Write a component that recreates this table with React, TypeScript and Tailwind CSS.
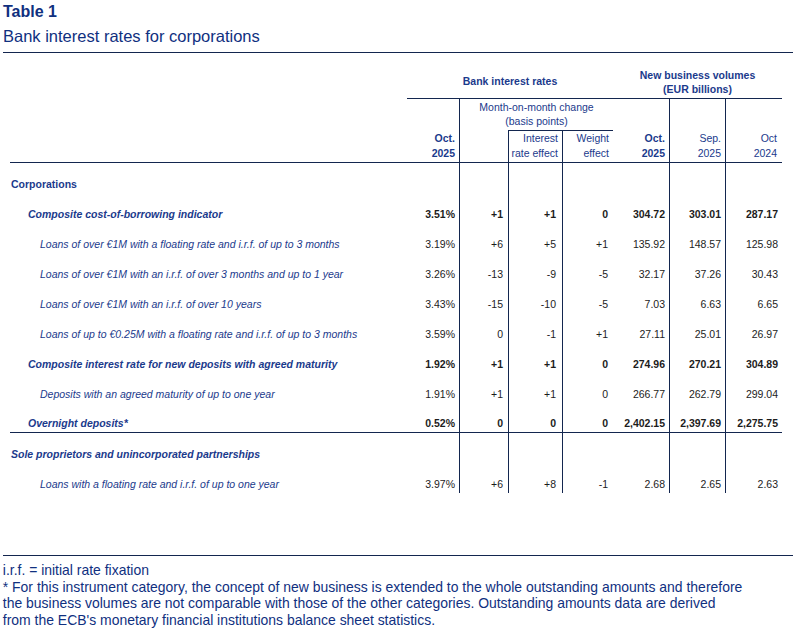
import React from "react";

const COLS = "grid grid-cols-[397px_52px_49px_54px_51px_56px_56px_57px]";
const LINE = "border-[#13264f]";

type Row = {
  label: string;
  indent: 0 | 1 | 2;
  style: "bold" | "bolditalic" | "italic";
  values?: string[];
  boldValues?: boolean;
  bottomLine?: boolean;
};

const rows: Row[] = [
  { label: "Corporations", indent: 0, style: "bold" },
  {
    label: "Composite cost-of-borrowing indicator",
    indent: 1,
    style: "bolditalic",
    values: ["3.51%", "+1", "+1", "0", "304.72", "303.01", "287.17"],
    boldValues: true,
  },
  {
    label: "Loans of over €1M with a floating rate and i.r.f. of up to 3 months",
    indent: 2,
    style: "italic",
    values: ["3.19%", "+6", "+5", "+1", "135.92", "148.57", "125.98"],
  },
  {
    label: "Loans of over €1M with an i.r.f. of over 3 months and up to 1 year",
    indent: 2,
    style: "italic",
    values: ["3.26%", "-13", "-9", "-5", "32.17", "37.26", "30.43"],
  },
  {
    label: "Loans of over €1M with an i.r.f. of over 10 years",
    indent: 2,
    style: "italic",
    values: ["3.43%", "-15", "-10", "-5", "7.03", "6.63", "6.65"],
  },
  {
    label: "Loans of up to €0.25M with a floating rate and i.r.f. of up to 3 months",
    indent: 2,
    style: "italic",
    values: ["3.59%", "0", "-1", "+1", "27.11", "25.01", "26.97"],
  },
  {
    label: "Composite interest rate for new deposits with agreed maturity",
    indent: 1,
    style: "bolditalic",
    values: ["1.92%", "+1", "+1", "0", "274.96", "270.21", "304.89"],
    boldValues: true,
  },
  {
    label: "Deposits with an agreed maturity of up to one year",
    indent: 2,
    style: "italic",
    values: ["1.91%", "+1", "+1", "0", "266.77", "262.79", "299.04"],
  },
  {
    label: "Overnight deposits*",
    indent: 1,
    style: "bolditalic",
    values: ["0.52%", "0", "0", "0", "2,402.15", "2,397.69", "2,275.75"],
    boldValues: true,
    bottomLine: true,
  },
  { label: "Sole proprietors and unincorporated partnerships", indent: 0, style: "bolditalic" },
  {
    label: "Loans with a floating rate and i.r.f. of up to one year",
    indent: 2,
    style: "italic",
    values: ["3.97%", "+6", "+8", "-1", "2.68", "2.65", "2.63"],
  },
];

const valueCellClass = [
  "pr-[4px]",
  `border-l ${LINE} pr-[5px]`,
  `border-l ${LINE} pr-[6px]`,
  `border-l ${LINE} pr-[5px]`,
  "pr-[4px]",
  `border-l ${LINE} pr-[4px]`,
  `border-l ${LINE} pr-[4px]`,
];

function BodyRow({ row }: { row: Row }) {
  const indent = row.indent === 0 ? "pl-[1px]" : row.indent === 1 ? "pl-[18px]" : "pl-[30px]";
  const st =
    row.style === "bold"
      ? "font-bold"
      : row.style === "bolditalic"
      ? "font-bold italic"
      : "italic";
  const vals = row.values ?? ["", "", "", "", "", "", ""];
  return (
    <div className={`${COLS} h-[30px] ${row.bottomLine ? `border-b ${LINE}` : ""}`}>
      <div className={`flex items-end pb-[3px] ${indent} ${st} text-[#1b3a8c] leading-[12px] whitespace-nowrap`}>
        {row.label}
      </div>
      {vals.map((v, i) => (
        <div
          key={i}
          className={`flex items-end justify-end pb-[3px] leading-[12px] text-[#1c1c1c] ${
            row.boldValues ? "font-bold" : ""
          } ${valueCellClass[i]}`}
        >
          {v}
        </div>
      ))}
    </div>
  );
}

export default function App() {
  return (
    <div className="w-[801px] h-[632px] bg-white font-['Liberation_Sans',Arial,sans-serif] overflow-hidden">
      <div className="px-[3px] pt-[2px] text-[#10307f]">
        <div className="text-[16px] font-bold leading-[20px]">Table 1</div>
        <div className="text-[16.5px] leading-[22px] mt-[3px]">Bank interest rates for corporations</div>
      </div>
      <div className={`ml-[3px] w-[790px] mt-[5px] border-t ${LINE}`} />

      <div className="ml-[10px] w-[772px] text-[10.5px]">
        {/* header */}
        <div className={`${COLS} grid-rows-[46px_31px_32px] border-b ${LINE} text-[#1b3a8c]`}>
          <div className="col-start-1 row-start-1 row-span-3" />
          <div
            className={`col-start-2 col-span-4 row-start-1 flex items-center justify-center pt-[14px] pb-[2px] font-bold border-b ${LINE}`}
          >
            Bank interest rates
          </div>
          <div
            className={`col-start-6 col-span-3 row-start-1 flex flex-col items-center justify-end pb-[2px] font-bold leading-[14px] border-b ${LINE}`}
          >
            <span>New business volumes</span>
            <span>(EUR billions)</span>
          </div>
          <div className="col-start-2 row-start-2 row-span-2 flex flex-col items-end justify-end pr-[4px] pb-[1px] font-bold leading-[15px]">
            <span>Oct.</span>
            <span>2025</span>
          </div>
          <div
            className={`col-start-3 col-span-3 row-start-2 flex flex-col items-center pt-[1px] leading-[14px] border-l ${LINE}`}
          >
            <span>Month-on-month change</span>
            <span>(basis points)</span>
          </div>
          <div className={`col-start-3 row-start-3 border-l ${LINE}`} />
          <div
            className={`col-start-4 row-start-3 flex flex-col items-end justify-end pr-[4px] pb-[1px] leading-[15px] border-l border-t ${LINE}`}
          >
            <span>Interest</span>
            <span>rate effect</span>
          </div>
          <div
            className={`col-start-5 row-start-3 flex flex-col items-end justify-end pr-[4px] pb-[1px] leading-[15px] border-l border-t ${LINE}`}
          >
            <span>Weight</span>
            <span>effect</span>
          </div>
          <div className="col-start-6 row-start-2 row-span-2 flex flex-col items-end justify-end pr-[4px] pb-[1px] font-bold leading-[15px]">
            <span>Oct.</span>
            <span>2025</span>
          </div>
          <div
            className={`col-start-7 row-start-2 row-span-2 flex flex-col items-end justify-end pr-[4px] pb-[1px] leading-[15px] border-l ${LINE}`}
          >
            <span>Sep.</span>
            <span>2025</span>
          </div>
          <div
            className={`col-start-8 row-start-2 row-span-2 flex flex-col items-end justify-end pr-[5px] pb-[1px] leading-[15px] border-l ${LINE}`}
          >
            <span>Oct</span>
            <span>2024</span>
          </div>
        </div>

        {/* body */}
        {rows.map((r, i) => (
          <BodyRow key={i} row={r} />
        ))}
      </div>

      <div className={`ml-[3px] w-[790px] mt-[62px] border-t ${LINE}`} />
      <div className="px-[3px] pt-[6px] text-[15px] leading-[16.5px] text-[#10307f] whitespace-nowrap scale-x-[0.93] origin-left">
        <div>i.r.f. = initial rate fixation</div>
        <div>
          * For this instrument category, the concept of new business is extended to the whole outstanding amounts and
          therefore
        </div>
        <div>
          the business volumes are not comparable with those of the other categories. Outstanding amounts data are
          derived
        </div>
        <div>from the ECB's monetary financial institutions balance sheet statistics.</div>
      </div>
    </div>
  );
}
